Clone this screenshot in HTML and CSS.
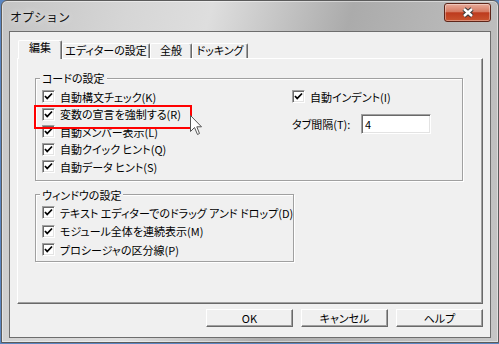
FILE: index.html
```html
<!DOCTYPE html>
<html lang="ja">
<head>
  <meta charset="UTF-8">
  <title>オプション</title>
  <link rel="stylesheet" href="styles.css">
</head>
<body>
  <div class="window">
    <div class="titlebar">
      <span class="title">オプション</span>
      <button class="close">
        <svg width="14" height="11" viewBox="0 0 14 11">
          <path d="M3 2 L11 9 M11 2 L3 9" stroke="#3b3b3b" stroke-width="4.6" fill="none"/>
          <path d="M3 2 L11 9 M11 2 L3 9" stroke="#fff" stroke-width="2.4" fill="none"/>
        </svg>
      </button>
    </div>

    <div class="client">
      <div class="tabs">
        <div class="tab tab-edit active">編集</div>
        <div class="tab tab-editor">エディターの設定</div>
        <div class="tab tab-general">全般</div>
        <div class="tab tab-dock">ドッキング</div>
      </div>

      <div class="panel">
        <fieldset class="group group-code">
          <legend>コードの設定</legend>
          <div class="cols">
            <div class="col">
              <div class="row"><span class="cb"><svg width="11" height="11"><polyline points="2,5 4.2,7.5 9,2.5"/></svg></span>自動構文チェック(K)</div>
              <div class="row marked"><span class="cb"><svg width="11" height="11"><polyline points="2,5 4.2,7.5 9,2.5"/></svg></span>変数の宣言を強制する(R)</div>
              <div class="row"><span class="cb"><svg width="11" height="11"><polyline points="2,5 4.2,7.5 9,2.5"/></svg></span>自動メンバー表示(L)</div>
              <div class="row"><span class="cb"><svg width="11" height="11"><polyline points="2,5 4.2,7.5 9,2.5"/></svg></span>自動クイック ヒント(Q)</div>
              <div class="row"><span class="cb"><svg width="11" height="11"><polyline points="2,5 4.2,7.5 9,2.5"/></svg></span>自動データ ヒント(S)</div>
            </div>
            <div class="col">
              <div class="row"><span class="cb"><svg width="11" height="11"><polyline points="2,5 4.2,7.5 9,2.5"/></svg></span>自動インデント(I)</div>
              <div class="field">
                <label class="field-label">タブ間隔(T):</label>
                <input class="text" type="text" value="4">
              </div>
            </div>
          </div>
        </fieldset>

        <fieldset class="group group-window">
          <legend>ウィンドウの設定</legend>
          <div class="row"><span class="cb"><svg width="11" height="11"><polyline points="2,5 4.2,7.5 9,2.5"/></svg></span>テキスト エディターでのドラッグ アンド ドロップ(D)</div>
          <div class="row"><span class="cb"><svg width="11" height="11"><polyline points="2,5 4.2,7.5 9,2.5"/></svg></span>モジュール全体を連続表示(M)</div>
          <div class="row"><span class="cb"><svg width="11" height="11"><polyline points="2,5 4.2,7.5 9,2.5"/></svg></span>プロシージャの区分線(P)</div>
        </fieldset>
      </div>

      <div class="buttons">
        <button class="btn">OK</button>
        <button class="btn">キャンセル</button>
        <button class="btn">ヘルプ</button>
      </div>
    </div>

    <svg class="cursor" width="13" height="21" viewBox="0 0 13 21">
      <path d="M0.5 0.5 L0.5 16.5 L4.5 12.5 L7.5 19.5 L9.5 18.5 L6.8 11.8 L11.5 11.8 Z" fill="#fff" stroke="#555" stroke-width="1"/>
    </svg>
  </div>
</body>
</html>
```

FILE: styles.css
```css
* {
  box-sizing: border-box;
}
body {
  margin: 0;
  background: #5a86c2;
  font-family: "Noto Sans CJK JP", sans-serif;
  font-size: 11px;
  color: #000;
}
.window {
  position: relative;
  width: 498px;
  height: 343px;
  margin-left: 1px;
  padding: 0 7px 4px;
  display: flex;
  flex-direction: column;
  border: 1px solid #5b5b5b;
  border-radius: 6px 6px 0 0;
  background: linear-gradient(105deg, #c4c4c4 0%, #d6d6d6 22%, #dedede 36%, #ababab 60%, #bababa 80%, #c6c6c6 100%);
  box-shadow: inset 0 0 0 1px rgba(255,255,255,0.45);
}
.titlebar {
  height: 30px;
  display: flex;
  justify-content: space-between;
  align-items: flex-start;
}
.title {
  padding: 8px 0 0 1px;
  font-size: 12px;
  line-height: 16px;
  color: #111;
  text-shadow: 0 0 6px rgba(255,255,255,0.9);
}
.close {
  margin-top: 2px;
  width: 47px;
  height: 19px;
  padding: 0;
  display: flex;
  align-items: center;
  justify-content: center;
  border: 1px solid #5e2519;
  border-radius: 3px;
  background: linear-gradient(#e8ab9a, #d67b63 45%, #bd3b1e 52%, #c9542f 100%);
  box-shadow: inset 0 0 0 1px rgba(255,255,255,0.35);
}
.client {
  flex: 1;
  display: flex;
  flex-direction: column;
  padding: 8px 7px 0;
  border: 1px solid #6d6d6d;
  background: #f0f0f0;
}
.tabs {
  position: relative;
  z-index: 1;
  height: 18px;
  margin-left: 1px;
  display: flex;
  align-items: flex-end;
  font-feature-settings: "palt";
}
.tab {
  height: 15px;
  line-height: 13px;
  text-align: center;
  white-space: nowrap;
  border: 1px solid;
  border-color: #fff #696969 transparent #fff;
  border-bottom: none;
  border-radius: 2px 2px 0 0;
  box-shadow: inset -1px 0 #a0a0a0;
}
.tab.active {
  height: 19px;
  margin-bottom: -1px;
  background: #f0f0f0;
}
.tab-edit { width: 44px; }
.tab-editor { width: 88px; }
.tab-general { width: 42px; }
.tab-dock { width: 56px; }
.panel {
  height: 246px;
  padding-left: 17px;
  border: 1px solid;
  border-color: #fff #696969 #696969 #fff;
  box-shadow: inset -1px -1px #a0a0a0;
}
.group {
  margin: 12px 0 0;
  padding: 3px 6px 4px;
  min-width: 0;
  border: 1px solid #a0a0a0;
  box-shadow: inset 1px 1px #fff, 1px 1px #fff;
  font-feature-settings: "palt";
}
.group legend {
  margin-left: -2px;
  padding: 0 2px;
  line-height: 14px;
  background: #f0f0f0;
}
.group-code {
  width: 428px;
}
.group-window {
  width: 259px;
  margin-top: 7px;
  padding-top: 2px;
  padding-bottom: 2px;
}
.cols {
  display: grid;
  grid-template-columns: 250px 1fr;
}
.row {
  height: 17.5px;
  display: flex;
  align-items: center;
  gap: 5px;
  white-space: nowrap;
}
.group-window .row {
  height: 18.5px;
}
.row.marked {
  position: relative;
}
.row.marked::after {
  content: "";
  position: absolute;
  left: -8px;
  top: -1px;
  width: 154px;
  height: 20px;
  border: 2px solid #f00;
}
.cb {
  flex: none;
  width: 13px;
  height: 13px;
  background: #fff;
  border: 1px solid;
  border-color: #a0a0a0 #fff #fff #a0a0a0;
  box-shadow: inset 1px 1px #696969, inset -1px -1px #e3e3e3;
}
.cb svg {
  display: block;
}
.cb polyline {
  fill: none;
  stroke: #000;
  stroke-width: 1.8;
}
.field {
  margin-top: 8px;
  display: flex;
  align-items: center;
}
.field-label {
  width: 69px;
  white-space: nowrap;
}
.text {
  width: 70px;
  height: 20px;
  padding: 0 3px;
  font: inherit;
  background: #fff;
  border: 1px solid;
  border-color: #a0a0a0 #fff #fff #a0a0a0;
  box-shadow: inset 1px 1px #696969, inset -1px -1px #e3e3e3;
  outline: none;
}
.buttons {
  margin-top: 5px;
  display: flex;
  justify-content: flex-end;
  gap: 8px;
}
.btn {
  width: 87px;
  height: 18px;
  padding: 0;
  font: inherit;
  line-height: 14px;
  font-feature-settings: "palt";
  background: #f0f0f0;
  border: 1px solid;
  border-color: #fff #696969 #696969 #fff;
  box-shadow: inset -1px -1px #a0a0a0;
}
.cursor {
  position: absolute;
  left: 188px;
  top: 114px;
}
```
